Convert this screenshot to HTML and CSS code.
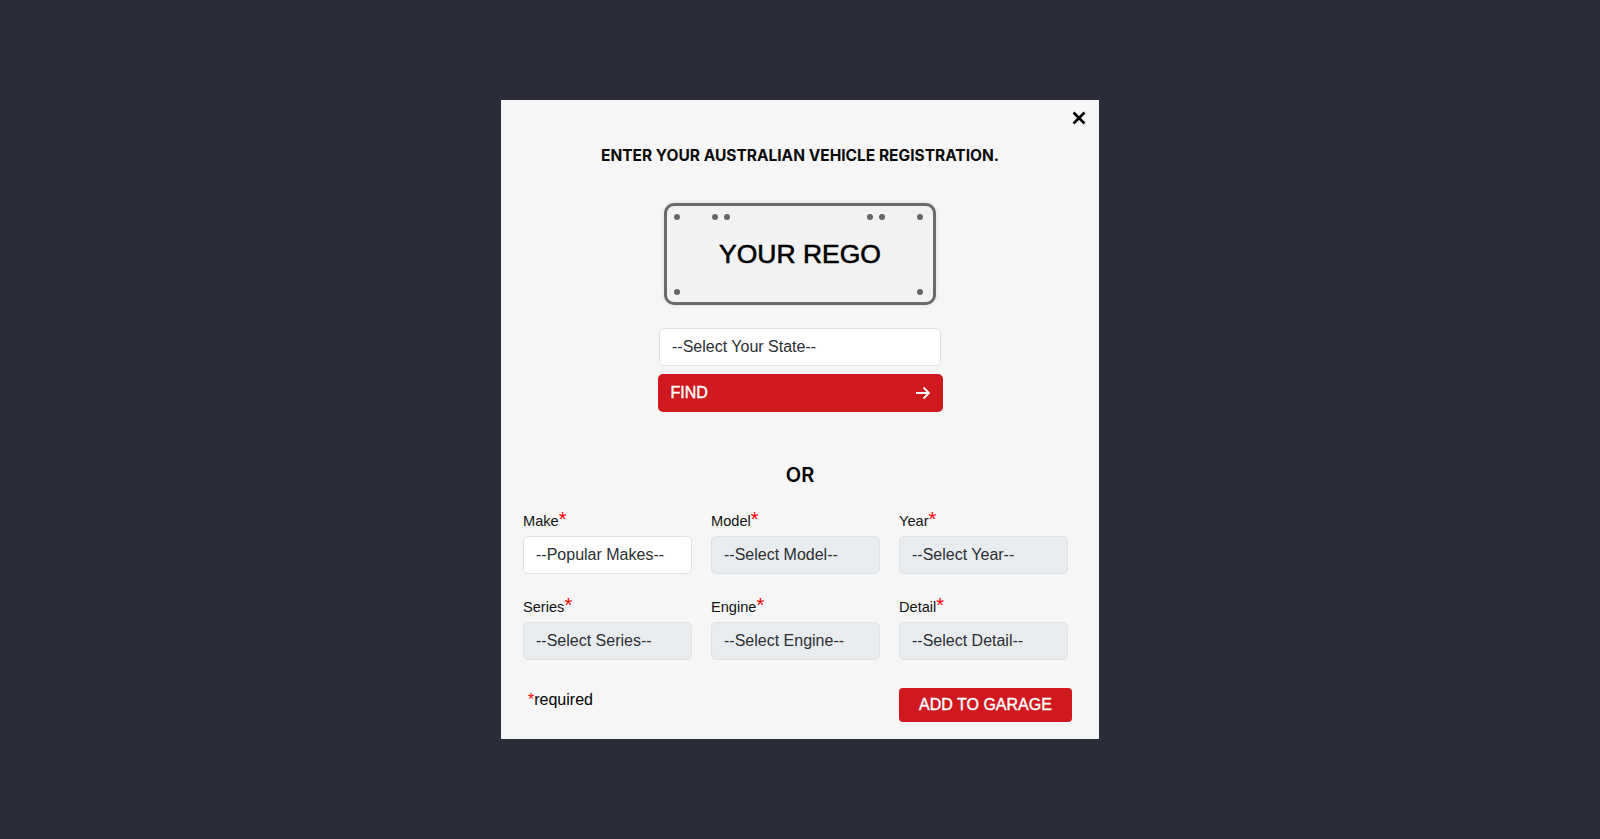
FILE: index.html
```html
<!DOCTYPE html>
<html lang="en">
<head>
  <meta charset="UTF-8" />
  <meta name="viewport" content="width=device-width, initial-scale=1.0" />
  <title>Add Vehicle</title>
  <link rel="stylesheet" href="styles.css">
</head>
<body>

  <div class="modal">
    <button type="button" class="close" aria-label="Close">
      <svg width="14" height="14" viewBox="0 0 14 14"><path d="M1.500 1.500l11 11M12.500 1.500l-11 11" stroke="#000" stroke-width="2.600" fill="none"/></svg>
    </button>

    <h2 class="title">ENTER YOUR AUSTRALIAN VEHICLE REGISTRATION.</h2>

    <div class="plate">
      <svg class="plate-dots" width="272" height="102" viewBox="0 0 272 102">
        <g fill="#666">
          <circle cx="13" cy="14" r="3"/>
          <circle cx="51" cy="14" r="3"/>
          <circle cx="63" cy="14" r="3"/>
          <circle cx="206" cy="14" r="3"/>
          <circle cx="218" cy="14" r="3"/>
          <circle cx="256" cy="14" r="3"/>
          <circle cx="13" cy="89" r="3"/>
          <circle cx="256" cy="89" r="3"/>
        </g>
      </svg>
      <span class="plate-text">YOUR REGO</span>
    </div>

    <select class="field state-select">
      <option>--Select Your State--</option>
    </select>

    <button type="button" class="find-btn">
      FIND
      <svg width="16" height="14" viewBox="0 0 16 14"><path d="M1 7h13M8.500 1.500L14 7l-5.500 5.500" stroke="#fff" stroke-width="1.800" fill="none"/></svg>
    </button>

    <h3 class="or">OR</h3>

    <form class="vehicle-form">
      <div class="form-group">
        <label>Make<span class="star">*</span></label>
        <select class="field"><option>--Popular Makes--</option></select>
      </div>
      <div class="form-group">
        <label>Model<span class="star">*</span></label>
        <select class="field" disabled><option>--Select Model--</option></select>
      </div>
      <div class="form-group">
        <label>Year<span class="star">*</span></label>
        <select class="field" disabled><option>--Select Year--</option></select>
      </div>
      <div class="form-group">
        <label>Series<span class="star">*</span></label>
        <select class="field" disabled><option>--Select Series--</option></select>
      </div>
      <div class="form-group">
        <label>Engine<span class="star">*</span></label>
        <select class="field" disabled><option>--Select Engine--</option></select>
      </div>
      <div class="form-group">
        <label>Detail<span class="star">*</span></label>
        <select class="field" disabled><option>--Select Detail--</option></select>
      </div>
    </form>

    <div class="form-footer">
      <p class="required"><span class="required-star">*</span>required</p>
      <button type="button" class="add-btn">ADD TO GARAGE</button>
    </div>
  </div>

</body>
</html>
```

FILE: styles.css
```css
html, body {
  height: 100%;
}

body {
  margin: 0;
  background: #2a2c3a;
  font-family: "Liberation Sans", Arial, sans-serif;
  color: #000;
  display: flex;
  justify-content: center;
  padding-top: 100px;
  box-sizing: border-box;
}

.modal {
  position: relative;
  box-sizing: border-box;
  width: 598px;
  height: 639px;
  background: #f6f6f6;
  padding: 47px 22px 0;
  display: flex;
  flex-direction: column;
  align-items: center;
}

.close {
  position: absolute;
  top: 11px;
  right: 13px;
  width: 14px;
  height: 14px;
  padding: 0;
  border: none;
  background: none;
  display: flex;
}

.title {
  margin: 0;
  font-family: "Inter", sans-serif;
  font-size: 15.500px;
  font-weight: 700;
  line-height: 18px;
  white-space: nowrap;
  color: #0a0a0a;
}

.plate {
  position: relative;
  box-sizing: border-box;
  width: 272px;
  height: 102px;
  margin-top: 38px;
  border: 3px solid #6a6a6a;
  border-radius: 10px;
  background: #f2f2f2;
  box-shadow: 0 0 4px rgba(0, 0, 0, 0.12);
  display: flex;
  align-items: center;
  justify-content: center;
}

.plate-text {
  font-size: 26.500px;
  line-height: 32px;
  -webkit-text-stroke: 0.6px #000;
}

.plate-dots {
  position: absolute;
  top: -3px;
  left: -3px;
}

.field {
  appearance: none;
  box-sizing: border-box;
  width: 100%;
  height: 38px;
  padding: 0 12px 1px;
  border: 1px solid #dfe1e4;
  border-radius: 5px;
  background: #fff;
  color: #2b2f33;
  font-family: "Liberation Sans", Arial, sans-serif;
  font-size: 16px;
  opacity: 1;
}

.field:disabled {
  background: #e9ecef;
}

.state-select {
  width: 282px;
  margin-top: 23px;
}

.find-btn {
  box-sizing: border-box;
  width: 285px;
  height: 38px;
  margin-top: 8px;
  padding: 0 12px 0 13px;
  border: none;
  border-radius: 5px;
  background: #d0181f;
  color: #fff;
  font-family: "Liberation Sans", Arial, sans-serif;
  font-size: 16px;
  -webkit-text-stroke: 0.4px #fff;
  display: flex;
  align-items: center;
  justify-content: space-between;
}

.or {
  margin: 51px 0 0;
  font-family: "Inter", sans-serif;
  font-size: 20px;
  font-weight: 600;
  line-height: 24px;
}

.vehicle-form {
  align-self: stretch;
  margin-top: 23px;
  display: grid;
  grid-template-columns: repeat(3, 169px);
  column-gap: 19px;
  row-gap: 22px;
}

.form-group label {
  display: block;
  height: 26px;
  line-height: 22px;
  font-size: 14.600px;
  color: #111;
}

.star {
  color: #f00;
  font-size: 20px;
  line-height: 10px;
}

.form-footer {
  align-self: stretch;
  margin-top: 28px;
  display: flex;
  justify-content: space-between;
  padding-left: 5px;
  padding-right: 5px;
}

.required {
  margin: 0;
  font-size: 16px;
  line-height: 24px;
}

.required-star {
  color: #f00;
}

.add-btn {
  box-sizing: border-box;
  width: 173px;
  height: 34px;
  padding: 0;
  border: none;
  border-radius: 4px;
  background: #d0181f;
  color: #fff;
  font-family: "Liberation Sans", Arial, sans-serif;
  font-size: 16px;
  -webkit-text-stroke: 0.4px #fff;
}
```
